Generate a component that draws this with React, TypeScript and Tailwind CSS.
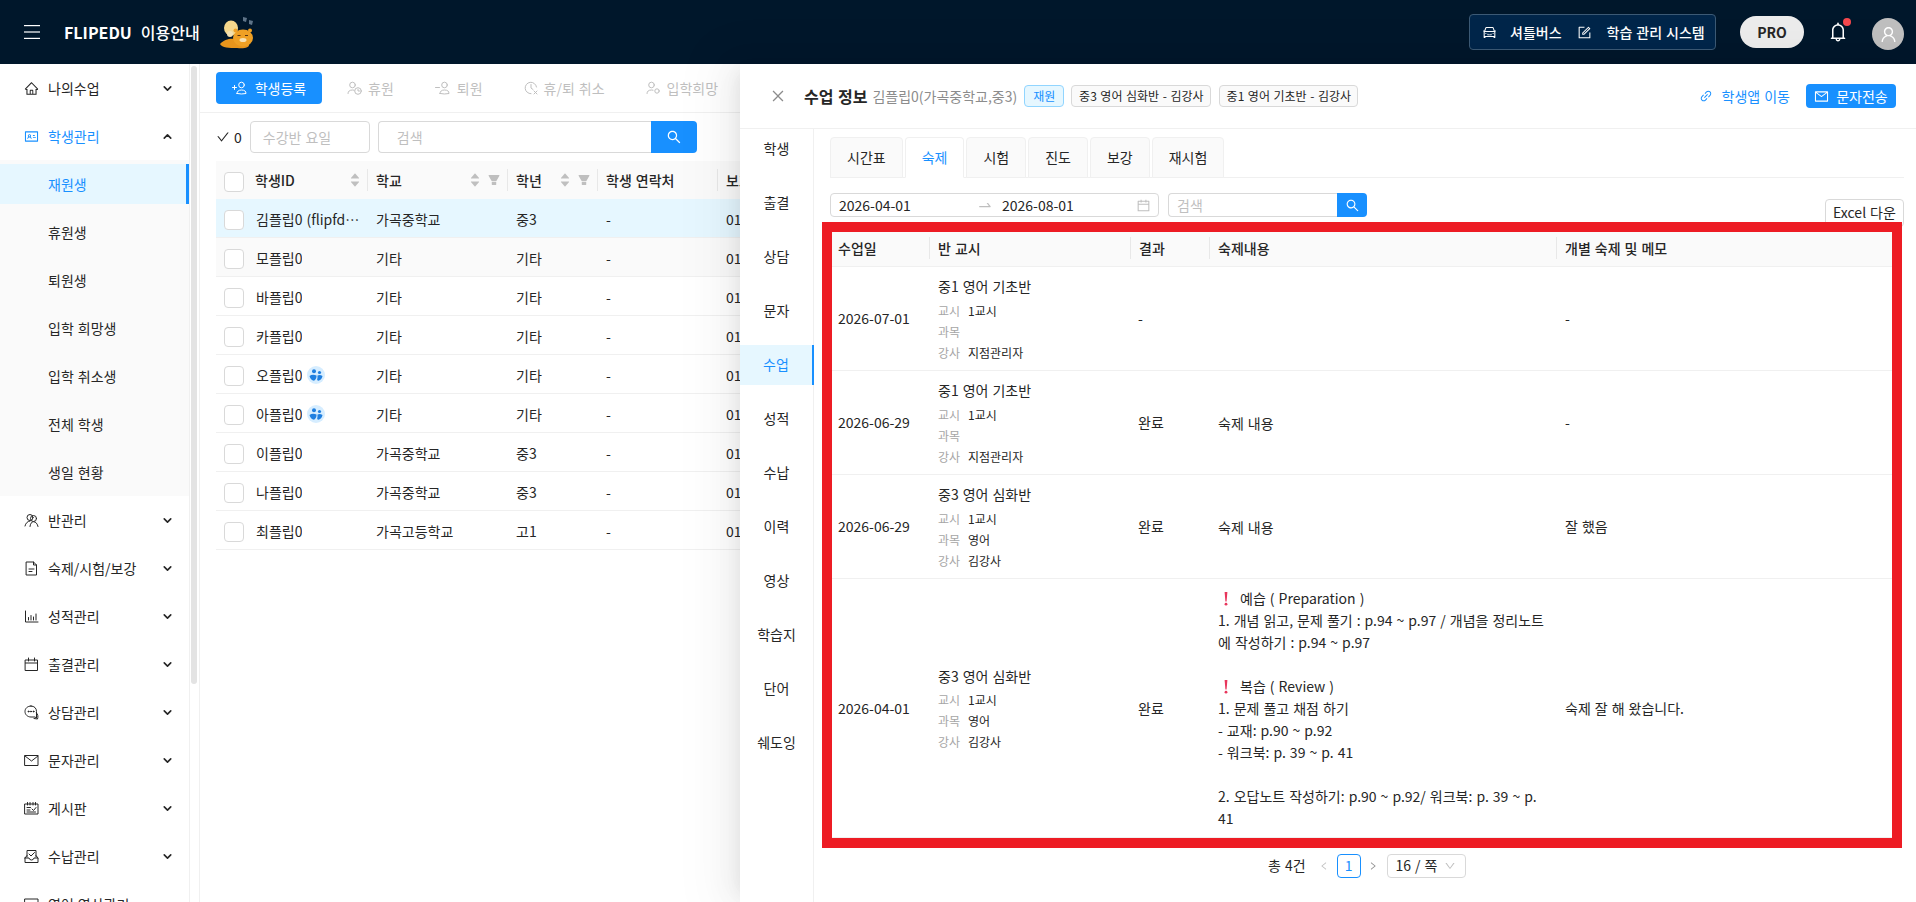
import React from "react";
import {
  AiOutlineHome, AiOutlineIdcard, AiOutlineMail,
  AiOutlineCar, AiOutlineForm, AiOutlineBell, AiOutlineUser, AiOutlineSearch, AiOutlineClose, AiOutlineLink,
  AiOutlineSwapRight, AiOutlineLeft, AiOutlineRight, AiOutlineDown, AiFillCaretUp, AiFillCaretDown, AiFillFilter,
  AiOutlineCheck, AiOutlineCalendar,
} from "react-icons/ai";
import { ChevronDown, ChevronUp } from "lucide-react";

type IconProps = { size?: number; className?: string };
const line = { fill: "none", stroke: "currentColor", strokeWidth: 1, strokeLinecap: "round" as const, strokeLinejoin: "round" as const };

function IconTeam({ size = 15, className }: IconProps) {
  return (
    <svg width={size} height={size} viewBox="0 0 15 15" className={className} {...line}>
      <circle cx="6" cy="4.5" r="3" />
      <circle cx="9.5" cy="5.5" r="3" />
      <path d="M1 13 Q2 8.5 6 8 M6 13.5 Q6.5 9 9.5 8.7 Q13 9 14 13.5" />
    </svg>
  );
}
function IconDoc({ size = 15, className }: IconProps) {
  return (
    <svg width={size} height={size} viewBox="0 0 15 15" className={className} {...line}>
      <path d="M2.5 1 H9.5 L12.5 4 V14 H2.5Z M9.5 1 V4 H12.5 M5 8 H10 M5 10.5 H8" />
    </svg>
  );
}
function IconChart({ size = 15, className }: IconProps) {
  return (
    <svg width={size} height={size} viewBox="0 0 15 15" className={className} {...line}>
      <path d="M1.5 2 V13 H14 M4.5 11 V8.5 M7 11 V6.5 M9.5 11 V8 M12 11 V5" />
    </svg>
  );
}
function IconCal({ size = 15, className }: IconProps) {
  return (
    <svg width={size} height={size} viewBox="0 0 15 15" className={className} {...line}>
      <path d="M1.5 3 H13.5 V13.5 H1.5Z M1.5 6 H13.5 M4.5 1 V4 M10.5 1 V4" />
    </svg>
  );
}
function IconChat({ size = 15, className }: IconProps) {
  return (
    <svg width={size} height={size} viewBox="0 0 15 15" className={className} {...line}>
      <path d="M7 1 C3.5 1 1 3.4 1 6.5 C1 9.6 3.5 12 7 12 H11 L12.5 13 V6.5 C12.5 3.4 10.5 1 7 1Z" />
      <path d="M12.5 8 C14 9 14.3 12 13.5 14 L10 13.5" />
      <circle cx="4.5" cy="6.5" r="0.5" fill="currentColor" />
      <circle cx="7" cy="6.5" r="0.5" fill="currentColor" />
      <circle cx="9.5" cy="6.5" r="0.5" fill="currentColor" />
    </svg>
  );
}
function IconMail({ size = 15, className }: IconProps) {
  return (
    <svg width={size} height={size} viewBox="0 0 15 15" className={className} {...line}>
      <path d="M1 2.5 H14 V12.5 H1Z M1 3 L7.5 8 L14 3" />
    </svg>
  );
}
function IconBoard({ size = 15, className }: IconProps) {
  return (
    <svg width={size} height={size} viewBox="0 0 15 15" className={className} {...line}>
      <path d="M1 3 H14 V13 H1Z M3.5 1.5 V4 M6 1.5 V4 M9 1.5 V4 M11.5 1.5 V4 M3 6.5 H6.5 M3 9 H6 M3 11 H11.5 M8 8 L9.5 9.5 L12 6.5" />
    </svg>
  );
}
function IconTray({ size = 15, className }: IconProps) {
  return (
    <svg width={size} height={size} viewBox="0 0 15 15" className={className} {...line}>
      <path d="M3 8 V1.5 H12 V8 M1 9 L3 6.5 M14 9 L12 6.5 M1 9 V13.5 H14 V9 H10 Q9.5 11 7.5 11 Q5.5 11 5 9 H1 M5 5 L7 7 L10.5 3.5" />
    </svg>
  );
}
function IconMonitor({ size = 15, className }: IconProps) {
  return (
    <svg width={size} height={size} viewBox="0 0 15 15" className={className} {...line}>
      <path d="M1 2 H14 V12 H1Z" />
    </svg>
  );
}

/* person glyph with a small mark beside it, as on the disabled toolbar buttons */
function PersonMark({ mark }: { mark: "add" | "remove" | "clock" | "small" }) {
  const left = mark === "add" || mark === "remove";
  return (
    <svg width="15" height="14" viewBox="0 0 15 14" {...line} className="shrink-0">
      {left ? (
        <>
          <circle cx="9.5" cy="4" r="2.8" />
          <path d="M5 12.5 Q5 9 9.5 9 Q14 9 14 12.5 Q9.5 13.5 5 12.5Z" />
          <path d={mark === "add" ? "M0.5 6.5 H4.5 M2.5 4.5 V8.5" : "M0.5 6.5 H4.5"} />
        </>
      ) : (
        <>
          <circle cx="5.5" cy="4" r="2.8" />
          <path d="M1 12.5 Q1 9 5.5 9 L7 9.2" />
          <circle cx="11" cy="10" r={mark === "clock" ? 3.3 : 2.2} />
          {mark === "clock" && <path d="M11 8.3 V10 H12.5" />}
        </>
      )}
    </svg>
  );
}
function ClockCancel() {
  return (
    <svg width="14" height="14" viewBox="0 0 14 14" {...line} className="shrink-0">
      <path d="M12.5 6 A5.7 5.7 0 1 0 7 12.7" />
      <path d="M7 3.5 V7 L9 8.5 M10 10 L13 13 M13 10 L10 13" />
    </svg>
  );
}

const menuTop = [
  { icon: IconTeam, label: "반관리" },
  { icon: IconDoc, label: "숙제/시험/보강" },
  { icon: IconChart, label: "성적관리" },
  { icon: IconCal, label: "출결관리" },
  { icon: IconChat, label: "상담관리" },
  { icon: IconMail, label: "문자관리" },
  { icon: IconBoard, label: "게시판" },
  { icon: IconTray, label: "수납관리" },
  { icon: IconMonitor, label: "영어 영상관리" },
];
const subMenu = ["재원생", "휴원생", "퇴원생", "입학 희망생", "입학 취소생", "전체 학생", "생일 현황"];

const students = [
  { n: "김플립0 (flipfdemo01)", s: "가곡중학교", g: "중3", sel: true },
  { n: "모플립0", s: "기타", g: "기타", alt: true },
  { n: "바플립0", s: "기타", g: "기타" },
  { n: "카플립0", s: "기타", g: "기타" },
  { n: "오플립0", s: "기타", g: "기타", b: true },
  { n: "아플립0", s: "기타", g: "기타", b: true },
  { n: "이플립0", s: "가곡중학교", g: "중3" },
  { n: "나플립0", s: "가곡중학교", g: "중3" },
  { n: "최플립0", s: "가곡고등학교", g: "고1" },
];

const sideTabs = ["학생", "출결", "상담", "문자", "수업", "성적", "수납", "이력", "영상", "학습지", "단어", "쉐도잉"];
const tabs = ["시간표", "숙제", "시험", "진도", "보강", "재시험"];

function Mascot() {
  return (
    <svg width="36" height="34" viewBox="0 0 36 34" className="ml-[19px] shrink-0">
      <ellipse cx="12" cy="13" rx="7" ry="7.5" fill="#f4d78c" />
      <circle cx="11" cy="19" r="3" fill="#f3e0b0" />
      <path d="M1 29 C5 24 12 23 16 24 L30 29 C31 33 24 34 18 33 C10 33 3 33 1 29Z" fill="#e8951c" />
      <ellipse cx="24" cy="23" rx="10" ry="8.5" fill="#efa024" />
      <circle cx="16.5" cy="15.5" r="2" fill="#efa024" />
      <circle cx="31" cy="15.5" r="2" fill="#efa024" />
      <rect x="18.5" y="20" width="3" height="1" fill="#5b3410" />
      <rect x="26" y="20" width="3" height="1" fill="#5b3410" />
      <ellipse cx="24" cy="25" rx="3.5" ry="2" fill="#f9e1b0" />
      <path d="M24 2 l4 1 l-1 4 l-3 -1z M30 5 l4 1 l-1 4 l-3 -1z" fill="#5e7488" />
    </svg>
  );
}

function Sidebar() {
  return (
    <div className="flex shrink-0 w-[200px] border-r border-[#f0f0f0]">
      <aside className="w-[190px] border-r border-[#f0f0f0] text-[14px] text-[#262626] overflow-hidden">
        <MenuRow icon={AiOutlineHome} label="나의수업" />
        <MenuRow icon={AiOutlineIdcard} label="학생관리" open />
        <div className="bg-[#fafafa] pt-1 pb-1">
          {subMenu.map((s, i) => (
            <div
              key={s}
              className={
                i === 0
                  ? "h-10 mb-2 pl-12 flex items-center bg-[#e6f7ff] text-[#1890ff] border-r-[3px] border-[#1890ff]"
                  : i === subMenu.length - 1
                  ? "h-10 pl-12 flex items-center"
                  : "h-10 mb-2 pl-12 flex items-center"
              }
            >
              {s}
            </div>
          ))}
        </div>
        {menuTop.map((m) => (
          <MenuRow key={m.label} icon={m.icon} label={m.label} />
        ))}
      </aside>
      <div className="w-[9px] pl-px pt-0.5">
        <div className="w-[6px] h-[618px] bg-[#e3e3e3] rounded-sm" />
      </div>
    </div>
  );
}

function MenuRow({ icon: I, label, open }: { icon: any; label: string; open?: boolean }) {
  return (
    <div className={"h-12 shrink-0 flex items-center pl-6 pr-[15px] " + (open ? "text-[#1890ff]" : "")}>
      <I size={15} className="mr-[9px] shrink-0" />
      <span className="flex-1">{label}</span>
      {open ? (
        <ChevronUp size={13} strokeWidth={3} className="text-[#262626]" />
      ) : (
        <ChevronDown size={13} strokeWidth={3} className="text-[#262626]" />
      )}
    </div>
  );
}

function Sort() {
  return (
    <span className="flex flex-col text-[#bfbfbf] leading-none">
      <AiFillCaretUp size={12} className="-mb-1" />
      <AiFillCaretDown size={12} />
    </span>
  );
}

function Check() {
  return <span className="block w-5 h-5 border border-[#d9d9d9] rounded-sm bg-white shrink-0" />;
}

function HeadCell({ w, label, sort, filter, first }: { w: string; label: string; sort?: boolean; filter?: boolean; first?: boolean }) {
  return (
    <div className={w + " shrink-0 h-[22px] flex items-center font-medium pl-[8px] pr-[6px] " + (first ? "" : "border-l border-[#e8e8e8]")}>
      <span className="flex-1 whitespace-nowrap">{label}</span>
      {sort && <Sort />}
      {filter && <AiFillFilter size={14} className="text-[#bfbfbf] ml-[6px]" />}
    </div>
  );
}

function Badge() {
  return (
    <span className="ml-[5px] w-[18px] h-[18px] rounded-full bg-[#d6edff] flex items-center justify-center shrink-0">
      <svg width="14" height="12" viewBox="0 0 14 12" fill="#1f7fe0">
        <circle cx="5" cy="2.2" r="2" />
        <circle cx="10.5" cy="3.5" r="1.6" />
        <path d="M0.5 7 Q3.5 4.8 7.5 6.5 Q7.8 10 5 11.8 Q1.5 11 0.5 7Z" />
        <path d="M8.5 6.5 Q11 5.5 13.5 7 Q13 10.5 9.5 11.8 Q7.5 11.5 8.5 9Z" />
      </svg>
    </span>
  );
}

function StudentList() {
  return (
    <main className="flex-1 min-w-0 overflow-hidden text-[14px] text-[#262626]">
      <div className="h-[49px] border-b border-[#f0f0f0] pl-4 pt-2 flex gap-[41px] text-[#bfbfbf] whitespace-nowrap">
        <div className="flex mr-[-16px]">
          <span className="w-[106px] h-8 rounded-sm bg-[#1890ff] text-white flex items-center justify-center gap-2">
            <PersonMark mark="add" />
            학생등록
          </span>
        </div>
        <span className="h-8 flex items-center gap-[6px]"><PersonMark mark="clock" />휴원</span>
        <span className="h-8 flex items-center gap-[7px]"><PersonMark mark="remove" />퇴원</span>
        <span className="h-8 flex items-center gap-[6px]"><ClockCancel />휴/퇴 취소</span>
        <span className="h-8 flex items-center gap-[6px]"><PersonMark mark="small" />입학희망</span>
      </div>
      <div className="pl-4 pt-2 flex items-center h-10">
        <AiOutlineCheck size={14} className="mr-1" />
        <span className="mr-2">0</span>
        <div className="w-[120px] h-8 border border-[#d9d9d9] rounded-sm px-3 flex items-center text-[#bfbfbf]">수강반 요일</div>
        <div className="w-[273px] ml-2 h-8 border border-[#d9d9d9] border-r-0 rounded-l-sm px-[18px] flex items-center text-[#bfbfbf]">검색</div>
        <div className="w-[46px] h-8 bg-[#1890ff] rounded-r-sm flex items-center justify-center text-white"><AiOutlineSearch size={16} /></div>
      </div>
      <div className="ml-4 mt-2 w-[560px]">
        <div className="h-[38px] bg-[#fafafa] flex items-center">
          <div className="w-[31px] pl-2 mt-1 shrink-0"><Check /></div>
          <HeadCell w="w-[120px]" label="학생ID" sort first />
          <HeadCell w="w-[140px]" label="학교" sort filter />
          <HeadCell w="w-[90px]" label="학년" sort filter />
          <HeadCell w="w-[120px]" label="학생 연락처" />
          <HeadCell w="w-[60px]" label="보호자" />
        </div>
        {students.map((s) => (
          <div
            key={s.n}
            className={
              "h-[39px] flex items-center border-b border-[#f0f0f0] whitespace-nowrap " +
              (s.sel ? "bg-[#e6f7ff]" : s.alt ? "bg-[#fafafa]" : "")
            }
          >
            <div className="w-[40px] pl-2 mt-1 shrink-0"><Check /></div>
            <div className="w-[111px] shrink-0 flex items-center pr-[6px] pt-0.5">
              <span className="truncate">{s.n}</span>
              {s.b && <Badge />}
            </div>
            <div className="w-[140px] shrink-0 pl-[9px] pt-0.5">{s.s}</div>
            <div className="w-[90px] shrink-0 pl-[9px] pt-0.5">{s.g}</div>
            <div className="w-[120px] shrink-0 pl-[9px] pt-0.5">-</div>
            <div className="w-[60px] shrink-0 pl-[9px] pt-0.5">01012345678</div>
          </div>
        ))}
      </div>
    </main>
  );
}

function ClassCell({ name, subject, teacher }: { name: string; subject: string; teacher: string }) {
  const Row = ({ k, v }: { k: string; v: string }) => (
    <div className="h-[21px] flex items-center text-[12px]">
      <span className="w-[21px] mr-[9px] text-[#a6a6a6] whitespace-nowrap">{k}</span>
      <span>{v}</span>
    </div>
  );
  return (
    <div>
      <div className="h-[22px] leading-[22px] mb-[3px]">{name}</div>
      <Row k="교시" v="1교시" />
      <Row k="과목" v={subject} />
      <Row k="강사" v={teacher} />
    </div>
  );
}

const cols = "grid grid-cols-[97px_201px_79px_347px_336px]";

function Bang() {
  return (
    <svg width="4" height="14" viewBox="0 0 4 14" className="inline-block ml-[6px] mr-[12px] align-[-2px]" fill="#e8365c">
      <path d="M0.6 0 H3.4 L2.6 9.5 H1.4Z" />
      <circle cx="2" cy="12.2" r="1.4" />
    </svg>
  );
}

function HomeworkRow({ date, cls, result, body, memo }: { date: string; cls: React.ReactNode; result: string; body: React.ReactNode; memo: string }) {
  return (
    <div className={cols + " border-b border-[#f0f0f0] items-center"}>
      <div className="pl-1.5">{date}</div>
      <div className="pl-[9px] pt-2 pb-[7px]">{cls}</div>
      <div className="pl-2">{result}</div>
      <div className="pl-[9px] pr-2 py-2 leading-[22px]">{body}</div>
      <div className="pl-[9px]">{memo}</div>
    </div>
  );
}

function Detail() {
  return (
    <section className="absolute right-0 top-16 bottom-0 w-[1176px] bg-white text-[14px] text-[#262626] flex flex-col shadow-[-6px_0_16px_-8px_rgba(0,0,0,0.08),-9px_0_28px_0_rgba(0,0,0,0.05),-12px_0_48px_16px_rgba(0,0,0,0.03)]">
      <header className="h-[65px] shrink-0 border-b border-[#f0f0f0] flex items-center pl-[30px] pr-5">
        <AiOutlineClose size={16} className="text-[#8c8c8c] mr-[18px]" />
        <span className="text-[16px] font-semibold mr-[5px] whitespace-nowrap">수업 정보</span>
        <span className="text-[#8c8c8c] mr-[7px] whitespace-nowrap">김플립0(가곡중학교,중3)</span>
        <span className="h-[22px] px-2 flex items-center text-[12px] bg-[#e6f7ff] border border-[#91d5ff] text-[#1890ff] rounded-sm mr-[7px]">재원</span>
        <span className="h-[22px] w-[140px] justify-center flex items-center text-[12px] bg-[#fafafa] border border-[#d9d9d9] rounded-sm mr-2 whitespace-nowrap">중3 영어 심화반 - 김강사</span>
        <span className="h-[22px] w-[139px] justify-center flex items-center text-[12px] bg-[#fafafa] border border-[#d9d9d9] rounded-sm whitespace-nowrap">중1 영어 기초반 - 김강사</span>
        <span className="ml-auto flex items-center text-[#1890ff] gap-[9px] mr-4 whitespace-nowrap">
          <AiOutlineLink size={14} />학생앱 이동
        </span>
        <span className="h-6 w-[90px] rounded-sm bg-[#1890ff] text-white flex items-center justify-center gap-[7px] whitespace-nowrap">
          <AiOutlineMail size={15} />문자전송
        </span>
      </header>
      <div className="flex-1 flex min-h-0">
        <nav className="w-[74px] shrink-0 border-r border-[#f0f0f0]">
          {sideTabs.map((t) => (
            <div
              key={t}
              className={
                "h-10 mb-[14px] pb-0.5 flex items-center justify-center " +
                (t === "수업" ? "-mr-px bg-[#e6f7ff] text-[#1890ff] border-r-2 border-[#1890ff]" : "")
              }
            >
              {t}
            </div>
          ))}
        </nav>
        <div className="flex-1 min-w-0 pt-2 pr-3">
          <div className="ml-4 flex gap-0.5 border-b border-[#f0f0f0] h-[41px]">
            {tabs.map((t) => (
              <span
                key={t}
                className={
                  "h-[41px] px-4 flex items-center border border-[#f0f0f0] rounded-t-sm whitespace-nowrap " +
                  (t === "숙제" ? "bg-white text-[#1890ff] border-b-white" : "bg-[#fafafa]")
                }
              >
                {t}
              </span>
            ))}
          </div>
          <div className="ml-4 mt-[15px] h-[29px] flex items-start">
            <div className="w-[329px] h-6 border border-[#d9d9d9] rounded-sm flex items-center pl-2 pr-[7px] text-[14px] whitespace-nowrap">
              <span className="w-[138px]">2026-04-01</span>
              <AiOutlineSwapRight size={16} className="text-[#bfbfbf] mr-[9px]" />
              <span>2026-08-01</span>
              <AiOutlineCalendar size={15} className="ml-auto text-[#bfbfbf]" />
            </div>
            <div className="w-[169px] ml-[9px] h-6 border border-[#d9d9d9] border-r-0 rounded-l-sm px-2 flex items-center text-[#bfbfbf]">검색</div>
            <div className="w-[30px] h-6 bg-[#1890ff] rounded-r-sm text-white flex items-center justify-center"><AiOutlineSearch size={15} /></div>
            <span className="ml-auto mt-[6px] w-[79px] h-7 pb-0.5 border border-[#d9d9d9] rounded-sm flex items-center justify-center whitespace-nowrap">Excel 다운</span>
          </div>
          <div className="relative ml-2 w-[1080px] border-[10px] border-[#ed1c24] bg-white">
            <div className={cols + " h-[35px] pb-0.5 items-center bg-[#fafafa] border-b border-[#f0f0f0] font-medium"}>
              <div className="pl-1.5">수업일</div>
              <div className="border-l border-[#e8e8e8] pl-2 h-[22px] flex items-center">반 교시</div>
              <div className="border-l border-[#e8e8e8] pl-2 h-[22px] flex items-center">결과</div>
              <div className="border-l border-[#e8e8e8] pl-2 h-[22px] flex items-center">숙제내용</div>
              <div className="border-l border-[#e8e8e8] pl-2 h-[22px] flex items-center">개별 숙제 및 메모</div>
            </div>
            <HomeworkRow date="2026-07-01" cls={<ClassCell name="중1 영어 기초반" subject="" teacher="지점관리자" />} result="-" body="" memo="-" />
            <HomeworkRow date="2026-06-29" cls={<ClassCell name="중1 영어 기초반" subject="" teacher="지점관리자" />} result="완료" body="숙제 내용" memo="-" />
            <HomeworkRow date="2026-06-29" cls={<ClassCell name="중3 영어 심화반" subject="영어" teacher="김강사" />} result="완료" body="숙제 내용" memo="잘 했음" />
            <HomeworkRow
              date="2026-04-01"
              cls={<ClassCell name="중3 영어 심화반" subject="영어" teacher="김강사" />}
              result="완료"
              memo="숙제 잘 해 왔습니다."
              body={
                <>
                  <div><Bang />예습 ( Preparation )</div>
                  <div>1. 개념 읽고, 문제 풀기 : p.94 ~ p.97 / 개념을 정리노트에 작성하기 : p.94 ~ p.97</div>
                  <div className="h-[22px]" />
                  <div><Bang />복습 ( Review )</div>
                  <div>1. 문제 풀고 채점 하기</div>
                  <div>- 교재: p.90 ~ p.92</div>
                  <div>- 워크북: p. 39 ~ p. 41</div>
                  <div className="h-[22px]" />
                  <div>2. 오답노트 작성하기: p.90 ~ p.92/ 워크북: p. 39 ~ p. 41</div>
                </>
              }
            />
          </div>
          <div className="mt-[6px] ml-[454px] h-[23px] flex items-center whitespace-nowrap">
            <span className="mr-[13px]">총 4건</span>
            <AiOutlineLeft size={10} className="text-[#bfbfbf] mr-[8px]" />
            <span className="w-6 h-6 border border-[#1890ff] rounded-sm text-[#1890ff] flex items-center justify-center">1</span>
            <AiOutlineRight size={10} className="text-[#8c8c8c] ml-[7px] mr-[9px]" />
            <span className="w-[79px] h-6 border border-[#d9d9d9] rounded-sm flex items-center pl-2 gap-1.5">16 / 쪽<AiOutlineDown size={12} className="text-[#bfbfbf]" /></span>
          </div>
        </div>
      </div>
    </section>
  );
}

export default function App() {
  return (
    <div className="relative h-[902px] w-[1916px] overflow-hidden flex flex-col bg-white [word-spacing:0.055em] font-['Noto_Sans_CJK_KR',sans-serif]">
      <header className="h-16 shrink-0 bg-[#00172b] flex items-center text-white pl-6 pr-3">
        <svg width="16" height="14" viewBox="0 0 16 14" className="mr-6 shrink-0" fill="#ffffff">
          <rect y="0" width="16" height="1.2" />
          <rect y="6.4" width="16" height="1.2" />
          <rect y="12.8" width="16" height="1.2" />
        </svg>
        <span className="text-[16px] font-semibold mr-[9px]">FLIPEDU</span>
        <span className="text-[16px] font-medium">이용안내</span>
        <Mascot />
        <div className="ml-auto w-[247px] h-9 border border-[#3c5a75] rounded-sm bg-[#01264a] flex items-center pl-3 text-[14px] font-medium whitespace-nowrap">
          <AiOutlineCar size={15} className="mr-[13px]" />
          <span className="mr-[15px]">셔틀버스</span>
          <AiOutlineForm size={15} className="mr-[15px]" />
          <span>학습 관리 시스템</span>
        </div>
        <span className="ml-6 w-16 h-8 rounded-full bg-[#ececec] text-[#262626] text-[14px] font-semibold flex items-center justify-center">PRO</span>
        <span className="relative ml-[23px]">
          <AiOutlineBell size={22} />
          <span className="absolute top-[-3px] right-[-2px] w-2 h-2 rounded-full bg-[#f5484d]" />
        </span>
        <span className="ml-[23px] w-8 h-8 mt-1 rounded-full bg-[#bfbfbf] flex items-center justify-center">
          <AiOutlineUser size={19} />
        </span>
      </header>
      <div className="flex-1 min-h-0 flex">
        <Sidebar />
        <StudentList />
      </div>
      <Detail />
    </div>
  );
}
